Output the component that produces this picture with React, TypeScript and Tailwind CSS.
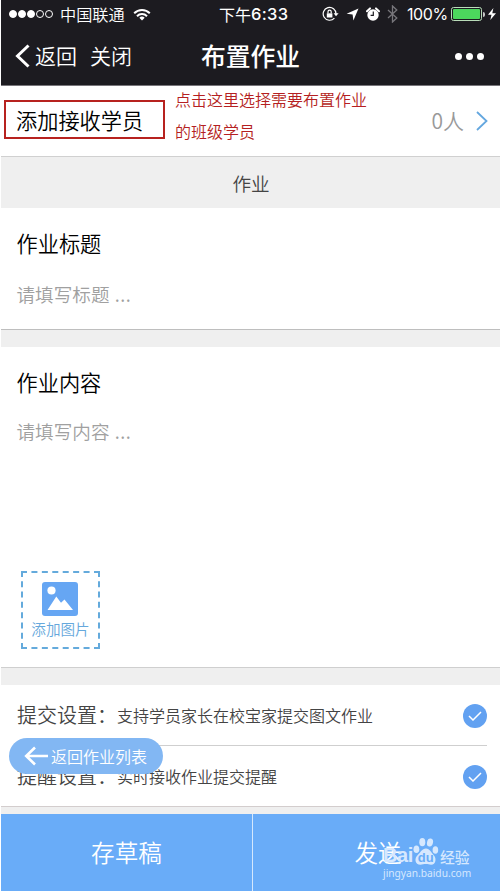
import React from 'react';

interface SettingRowProps {
  label: string;
  text: string;
}

const StatusBar: React.FC = () => (
  <div className="flex h-[28px] items-center pl-[8px] pr-[3px] text-[16px] text-white">
    <div className="flex w-[45px] items-center gap-[1px]">
      {[true, true, true, false, false].map((filled, i) => (
        <span
          key={i}
          className={`h-[8px] w-[8px] shrink-0 rounded-full border border-white ${filled ? 'bg-white' : ''}`}
        />
      ))}
    </div>
    <span className="ml-[6px] w-[67px] whitespace-nowrap text-[16.2px] font-[350]">中国联通</span>
    <svg className="ml-[6px] h-[13px] w-[18px]" viewBox="0 0 18 13" fill="none" stroke="white" strokeWidth="2">
      <path d="M1.2 5.2a11 11 0 0 1 15.6 0M4 8.2a7 7 0 0 1 10 0" />
      <path d="M9 12.5 6.3 9.8a3.8 3.8 0 0 1 5.4 0Z" fill="white" stroke="none" />
    </svg>
    <span className="-mt-[1px] ml-[68px] flex w-[72px] items-center whitespace-nowrap">
      下午
      <span className="mt-[1px] font-['Inter','Roboto',sans-serif] text-[16.5px] font-medium tracking-[0.3px]">6:33</span>
    </span>
    <div className="ml-[31px] flex items-center">
      {/* rotation lock */}
      <svg className="h-[16px] w-[17px]" viewBox="0 0 17 16" fill="none" stroke="white" strokeWidth="1.2">
        <path d="M12.4 12.1A6.4 6.4 0 1 1 14 8" />
        <path d="M11.6 7.2h5L14 10.3Z" fill="white" stroke="none" />
        <rect x="4.8" y="7.3" width="5.6" height="4.2" fill="white" stroke="none" />
        <path d="M6 7.3V5.8a1.6 1.6 0 0 1 3.2 0v1.5" />
      </svg>
      <svg className="ml-[7px] h-[13px] w-[13px]" viewBox="0 0 13 13" fill="white">
        <path d="M12.5.5 7.4 12.4 6.6 6.5.6 5.7Z" />
      </svg>
      <svg className="ml-[7px] h-[15px] w-[14px]" viewBox="0 0 14 15">
        <circle cx="7" cy="8" r="5.7" fill="white" />
        <path d="M1 4.2 4 1.4M13 4.2 10 1.4" stroke="white" strokeWidth="2" strokeLinecap="round" />
        <path d="M7.3 4.6v3.7H4.6" fill="none" stroke="#1c1b20" strokeWidth="1.2" />
      </svg>
      <svg className="ml-[7px] h-[18px] w-[11px]" viewBox="0 0 11 18" fill="none" stroke="#77767b" strokeWidth="1.3">
        <path d="m1 5 8.8 8L5.5 17V1l4.3 4L1 13" />
      </svg>
    </div>
    <span className="ml-[9px] w-[41px] whitespace-nowrap font-['Inter','Roboto',sans-serif] text-[16px] tracking-[-0.4px]">100%</span>
    <div className="ml-[3px] flex items-center">
      <div className="h-[14px] w-[31px] rounded-[2.5px] border border-[#b9dcb9] p-[1px]">
        <div className="h-full w-full rounded-[1px] bg-[#4cd75d]" />
      </div>
      <div className="ml-[1px] h-[5px] w-[2px] rounded-r bg-[#c8c8c8]" />
    </div>
    <svg className="ml-[3px] h-[12px] w-[8px] shrink-0" viewBox="0 0 8 12" fill="white">
      <path d="M5.4 0 0 6.7h3.5L2.3 12 8 5.2H4.3Z" />
    </svg>
  </div>
);

const NavBar: React.FC = () => (
  <div className="grid h-[56px] grid-cols-[1fr_auto_1fr] items-center text-white">
    <div className="flex items-center pl-[14px] text-[21px] font-[350]">
      <svg className="mr-[5px] h-[24px] w-[15px]" viewBox="0 0 15 24" fill="none" stroke="white" strokeWidth="3">
        <path d="M13.5 1.5 2.5 12l11 10.5" />
      </svg>
      <span>返回</span>
      <span className="ml-[13px]">关闭</span>
    </div>
    <h1 className="-mt-[1px] text-[24.8px] font-medium leading-none">布置作业</h1>
    <div className="flex justify-end gap-[4px] pr-[16px]">
      <span className="h-[7px] w-[7px] rounded-full bg-white" />
      <span className="h-[7px] w-[7px] rounded-full bg-white" />
      <span className="h-[7px] w-[7px] rounded-full bg-white" />
    </div>
  </div>
);

const SettingRow: React.FC<SettingRowProps> = ({ label, text }) => (
  <div className="flex h-[60px] items-center text-[#444]">
    <span className="w-[100px] whitespace-nowrap text-[20px] font-[350]">{label}：</span>
    <span className="flex-1 text-[16px] font-[350]">{text}</span>
    <span className="mt-[2px] flex h-[24px] w-[24px] items-center justify-center rounded-full bg-[#62a1f1]">
      <svg className="h-[10px] w-[14px]" viewBox="0 0 14 10" fill="none" stroke="white" strokeWidth="1.5">
        <path d="M1 5 5 9 13 1" />
      </svg>
    </span>
  </div>
);

const Watermark: React.FC = () => (
  <div className="pointer-events-none absolute left-[383px] top-[837px] w-[95px] text-[#d6e8fe]">
    <div className="flex h-[29px] items-end">
      <span className="w-[30px] font-['Liberation_Sans',sans-serif] text-[20px] font-bold leading-[21px] tracking-[-0.4px]">Bai</span>
      <svg className="h-[29px] w-[26px]" viewBox="0 0 26 29" fill="currentColor">
        <ellipse cx="3.4" cy="12.2" rx="2.9" ry="3.8" />
        <ellipse cx="9.3" cy="5.2" rx="3" ry="4.1" />
        <ellipse cx="17" cy="5.5" rx="3" ry="4.1" transform="rotate(12 17 5.5)" />
        <ellipse cx="22.4" cy="13" rx="2.8" ry="3.8" />
        <path d="M13 11.5c3.8 0 5.1 4 7.4 6.2 3.6 3.3 2.5 10-2.3 10-2 0-3.1-.6-5.2-.6s-3.6.7-5.4.7C1.8 27.8.9 21 5 17.7c2.5-2 3.9-6.2 8-6.2Z" />
        <text x="4.8" y="25" fill="#69acf8" fontSize="13" fontWeight="bold" fontFamily="Liberation Sans">du</text>
      </svg>
      <span className="ml-[1px] whitespace-nowrap text-[14.8px] font-medium leading-[18px]">经验</span>
    </div>
    <div className="whitespace-nowrap font-['Noto_Sans',sans-serif] text-[10.2px] leading-[14px]">jingyan.baidu.com</div>
  </div>
);

const App: React.FC = () => {
  return (
    <div className="relative h-[891px] w-[500px] overflow-hidden bg-white pl-[1px] font-['Noto_Sans_CJK_SC',sans-serif]">
      <div className="flex h-full flex-col bg-[#efefef]">
        <header className="h-[86px] border-b border-[#77757a] bg-[#1c1b20]">
          <StatusBar />
          <NavBar />
        </header>

        {/* Receivers */}
        <section className="flex h-[71px] items-center border-b border-[#d0d0d0] bg-white pl-[3px] pr-[12px]">
          <div className="mb-[4px] flex h-[39px] w-[161px] items-center border-2 border-[#b7221f] pl-[10px] pt-[2px] text-[21.2px] font-[350] text-black">
            添加接收学员
          </div>
          <p className="mb-[12px] ml-[10px] w-[200px] text-[16px] font-[350] leading-[32px] text-[#b51f22]">
            点击这里选择需要布置作业
            <br />
            的班级学员
          </p>
          <span className="ml-auto text-[21px] font-[350] text-[#999]">0人</span>
          <svg className="ml-[12px] h-[20px] w-[12px]" viewBox="0 0 12 20" fill="none" stroke="#64a7df" strokeWidth="1.8">
            <path d="m1 1 9.5 9L1 19" />
          </svg>
        </section>

        <h2 className="flex h-[51px] items-center justify-center pl-[1px] text-[18.6px] font-[350] text-[#444]">作业</h2>

        <section className="h-[122px] border-b border-[#bebebe] bg-white px-[15.5px] pt-[19px]">
          <h3 className="text-[21.2px] font-[350] leading-[32px] text-black">作业标题</h3>
          <p className="mt-[21px] text-[18.6px] font-[350] leading-[28px] text-[#a0a0a0]">
            请填写标题 <span className="ml-[1px] tracking-[0.6px]">...</span>
          </p>
        </section>

        <section className="mt-[17px] h-[321px] border-b border-[#cfcfcf] bg-white px-[15.5px] pt-[19px]">
          <h3 className="text-[21.2px] font-[350] leading-[32px] text-black">作业内容</h3>
          <p className="mt-[19px] text-[18.6px] font-[350] leading-[28px] text-[#a0a0a0]">
            请填写内容 <span className="ml-[1px] tracking-[0.6px]">...</span>
          </p>
          <div className="ml-[4.5px] mt-[126px] flex h-[78px] w-[79px] flex-col items-center border-2 border-dashed border-[#64aadc] pt-[9px]">
            <svg className="mr-[1px] h-[34px] w-[36px]" viewBox="0 0 36 34">
              <rect width="36" height="34" rx="3" fill="#66a6f3" />
              <circle cx="9.5" cy="8.5" r="4.1" fill="white" />
              <path d="M5.5 28 14.3 14.5l4.7 6.3 3.5-3.3L31 28Z" fill="white" />
            </svg>
            <span className="mt-[2px] whitespace-nowrap text-[14.6px] font-[350] leading-[22px] text-[#66a8dc]">添加图片</span>
          </div>
        </section>

        <section className="mt-[17px] h-[122px] border-b border-[#d3cdcd] bg-white pl-[16px] pr-[13px]">
          <div className="border-b border-[#cfcfcf]">
            <SettingRow label="提交设置" text="支持学员家长在校宝家提交图文作业" />
          </div>
          <SettingRow label="提醒设置" text="实时接收作业提交提醒" />
        </section>

        <footer className="mt-[7px] grid flex-1 grid-cols-[252px_1fr] bg-[#69acf8] text-[23.6px] font-[350] text-white">
          <button className="border-r border-[#d5e8fd]">存草稿</button>
          <button className="pl-[3px]">发送</button>
        </footer>
      </div>

      {/* Floating back button */}
      <button className="absolute left-[9px] top-[738px] flex h-[36px] w-[154px] items-center rounded-full bg-[#82b7f3] pl-[15px] text-[16px] font-[350] text-white">
        <svg className="mr-[3px] h-[20px] w-[24px]" viewBox="0 0 24 20" fill="none" stroke="white" strokeWidth="2.6">
          <path d="M24 10H2.5M11 1.5 2.2 10l8.8 8.5" />
        </svg>
        返回作业列表
      </button>

      <Watermark />
    </div>
  );
};

export default App;
